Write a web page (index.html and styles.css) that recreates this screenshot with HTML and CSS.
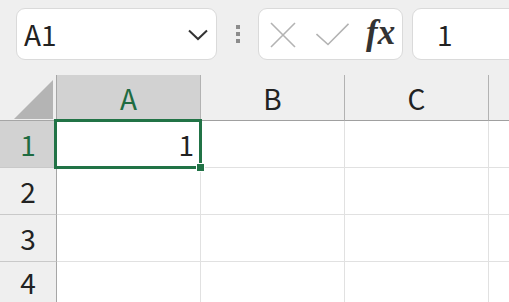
FILE: index.html
```html
<!DOCTYPE html>
<html>
<head>
<meta charset="utf-8">
<link rel="stylesheet" href="styles.css">
</head>
<body>
<div class="toolbar">
  <div class="namebox">
    <span class="name">A1</span>
    <svg class="chev" width="20" height="12" viewBox="0 0 20 12"><path d="M1 1.5 L10 10 L19 1.5" fill="none" stroke="#333" stroke-width="2"/></svg>
  </div>
  <div class="dots"><i></i><i></i><i></i></div>
  <div class="fnbox">
    <svg class="ic" width="26" height="26" viewBox="0 0 26 26"><path d="M1 1 L25 25 M25 1 L1 25" stroke="#b3b3b3" stroke-width="1.6" fill="none"/></svg>
    <svg class="ic" width="33" height="23" viewBox="0 0 33 23"><path d="M0.5 11 L12 21.5 L32.5 0.8" stroke="#b3b3b3" stroke-width="1.6" fill="none"/></svg>
    <span class="fx">fx</span>
  </div>
  <div class="input"><span class="val">1</span></div>
</div>
<div class="grid">
  <div class="corner"><div class="tri"></div></div>
  <div class="ch sel-h">A</div>
  <div class="ch">B</div>
  <div class="ch">C</div>
  <div class="ch last"></div>

  <div class="rh sel-h">1</div>
  <div class="cell num active">1<div class="selbox"><div class="handle"></div></div></div>
  <div class="cell"></div>
  <div class="cell"></div>
  <div class="cell last"></div>

  <div class="rh">2</div>
  <div class="cell"></div>
  <div class="cell"></div>
  <div class="cell"></div>
  <div class="cell last"></div>

  <div class="rh">3</div>
  <div class="cell"></div>
  <div class="cell"></div>
  <div class="cell"></div>
  <div class="cell last"></div>

  <div class="rh">4</div>
  <div class="cell"></div>
  <div class="cell"></div>
  <div class="cell"></div>
  <div class="cell last"></div>
</div>
</body>
</html>
```
FILE: styles.css
```css
* { box-sizing: border-box; }
html, body { margin: 0; padding: 0; }
body {
  width: 509px;
  height: 302px;
  overflow: hidden;
  background: #efefef;
  font-family: "Noto Sans CJK JP", "Noto Sans", sans-serif;
  color: #222;
}
.toolbar {
  display: flex;
  align-items: flex-start;
  padding: 8px 0 0 16px;
  height: 75px;
  width: 600px;
}
.namebox, .fnbox, .input, .dots {
  flex-shrink: 0;
}
.namebox, .fnbox, .input {
  height: 52px;
  background: #fff;
  border: 1px solid #dadada;
  border-radius: 9px;
  display: flex;
  align-items: center;
}
.namebox {
  width: 201px;
  padding: 0 8px 0 7px;
  justify-content: space-between;
}
.name { font-size: 28px; line-height: 1; color: #222; }
.chev { margin-top: 2px; }
.dots {
  width: 41px;
  height: 52px;
  display: flex;
  flex-direction: column;
  align-items: center;
  justify-content: center;
  gap: 3px;
}
.dots i {
  display: block;
  width: 4px;
  height: 4px;
  background: #8c8c8c;
}
.fnbox {
  width: 145px;
  padding: 0 0 0 11px;
}
.fnbox .ic:first-child { margin-right: 20px; margin-top: 1px; }
.fnbox .ic:nth-child(2) { margin-right: 17px; margin-top: 1px; }
.fx {
  font-family: "Liberation Serif", "DejaVu Serif", serif;
  font-style: italic;
  font-weight: bold;
  font-size: 35px;
  color: #333;
  line-height: 1;
  margin-top: -3px;
}
.input {
  margin-left: 9px;
  width: 140px;
  padding-left: 24px;
}
.val { font-size: 28px; line-height: 1; color: #222; }

.grid {
  display: grid;
  grid-template-columns: 57px 144px 144px 144px 60px;
  grid-template-rows: 46px 47px 47px 47px 41px;
}
.corner {
  background: #efefef;
  border-right: 1px solid #a6a6a6;
  border-bottom: 1px solid #a6a6a6;
  display: flex;
  align-items: flex-end;
  justify-content: flex-end;
  padding: 0 3px 1px 0;
}
.tri {
  width: 39px;
  height: 39px;
  background: #b4b4b4;
  clip-path: polygon(100% 0, 100% 100%, 0 100%);
}
.ch {
  background: #efefef;
  border-right: 1px solid #b2b2b2;
  border-bottom: 1px solid #a0a0a0;
  display: flex;
  align-items: center;
  justify-content: center;
  font-size: 28px;
  line-height: 1;
  color: #222;
}
.rh {
  background: #efefef;
  border-right: 1px solid #a6a6a6;
  border-bottom: 1px solid #c9c9c9;
  display: flex;
  align-items: center;
  justify-content: center;
  font-size: 28px;
  line-height: 1;
  color: #222;
}
.sel-h {
  background: #d2d2d2;
  color: #1f6b41;
}
.cell {
  background: #fff;
  border-right: 1px solid #e1e1e1;
  border-bottom: 1px solid #e1e1e1;
}
.num {
  display: flex;
  align-items: center;
  justify-content: flex-end;
  padding-right: 6px;
  font-size: 28px;
  line-height: 1;
  color: #222;
}
.active { position: relative; }
.selbox {
  position: absolute;
  left: -3px;
  top: -2px;
  right: -2px;
  bottom: -2px;
  border: 3px solid #217346;
}
.handle {
  position: absolute;
  right: -6px;
  bottom: -6px;
  width: 9px;
  height: 9px;
  background: #217346;
  border: 1px solid #fff;
}
```
